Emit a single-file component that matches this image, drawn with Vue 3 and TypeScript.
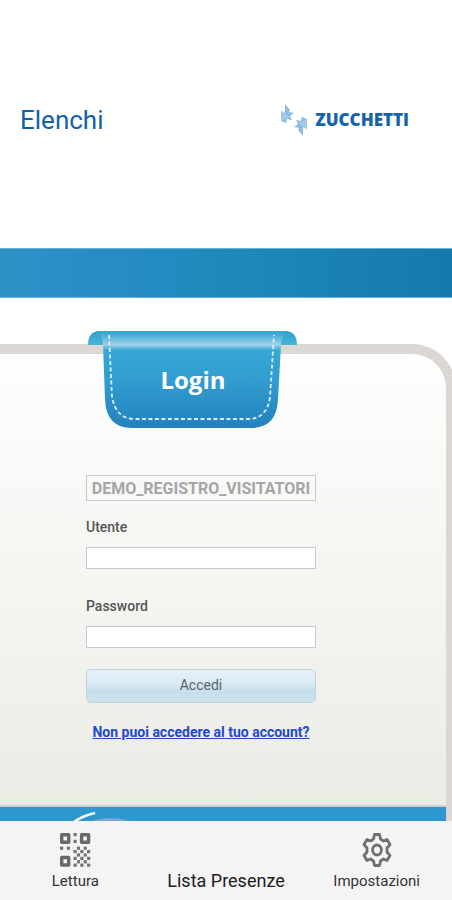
<script setup lang="ts">
import { ref } from 'vue'

const company = ref<string>('DEMO_REGISTRO_VISITATORI')
const user = ref<string>('')
const password = ref<string>('')

// Dark modules of the QR symbol on a 9 x 10 grid
const modules: [number, number][] = [
  [4, 0], [4, 2],
  [0, 4], [2, 4], [5, 4], [7, 4],
  [4, 5], [6, 5], [8, 5],
  [5, 6], [7, 6],
  [4, 7], [6, 7], [8, 7],
  [5, 8], [7, 8],
  [4, 9], [6, 9], [8, 9],
]
</script>

<template>
  <div class="page">
    <header class="header">
      <a class="title" href="#elenchi">Elenchi</a>
      <div class="brand">
        <svg class="brand-mark" viewBox="0 0 26 32" aria-hidden="true">
          <g id="brandArrow">
            <path d="M0 7L4 9V0L9 6L8 8L13 9L9 12L11 16L6 15L5 19L0 17Z" fill="#8dbbe0" />
            <path d="M0 7L4 9L8 13L0 17Z" fill="#a5cae8" />
          </g>
          <use href="#brandArrow" transform="rotate(180 13 16)" />
        </svg>
        <span class="brand-name">ZUCCHETTI</span>
      </div>
    </header>
    <div class="band"></div>

    <main class="content">
      <section class="card">
        <div class="ribbon">
          <svg class="ribbon-shape" viewBox="0 0 210 98" aria-hidden="true">
            <defs>
              <linearGradient id="ribbonFill" x1="0" y1="0" x2="0" y2="1">
                <stop offset="0" stop-color="#2ba4d4" />
                <stop offset="0.05" stop-color="#4db1da" />
                <stop offset="0.14" stop-color="#9ed2eb" />
                <stop offset="0.2" stop-color="#36a7d5" />
                <stop offset="0.5" stop-color="#329dd0" />
                <stop offset="1" stop-color="#2381bd" />
              </linearGradient>
              <linearGradient id="foldFill" x1="0" y1="0" x2="0" y2="1">
                <stop offset="0" stop-color="#2d9fc9" />
                <stop offset="1" stop-color="#49b6d7" />
              </linearGradient>
            </defs>
            <path d="M0 14Q0 0 12 0H197Q209 0 209 14H192V6H17V14Z" fill="url(#foldFill)" />
            <path d="M8 0H201Q193 3 193 14L190 68Q189 97 163 97H44Q18 97 17 68L15 14Q15 3 8 0Z" fill="url(#ribbonFill)" />
            <path d="M21 4 24 66Q28 88 47 88H160Q179 88 182 66L186 4" fill="none" stroke="#d8eff8" stroke-width="1.8" stroke-dasharray="4 2.500" />
          </svg>
          <h1 class="ribbon-title">Login</h1>
        </div>

        <form class="form" @submit.prevent>
          <input v-model="company" class="company" type="text" aria-label="DEMO_REGISTRO_VISITATORI" disabled />
          <div class="field">
            <label for="utente">Utente</label>
            <input id="utente" v-model="user" type="text" />
          </div>
          <div class="field">
            <label for="password">Password</label>
            <input id="password" v-model="password" type="password" />
          </div>
          <button class="submit" type="submit">Accedi</button>
          <a class="help" href="#account">Non puoi accedere al tuo account?</a>
        </form>
        <div class="card-foot">
          <svg class="swirl" viewBox="0 0 64 14" aria-hidden="true">
            <path d="M20 14Q38 8 58 14Z" fill="#7fa5d8" />
            <path d="M2 15Q10 9 23 6" fill="none" stroke="#f4fbff" stroke-width="2.5" />
          </svg>
        </div>
      </section>
    </main>

    <nav class="tabs">
      <a class="tab" href="#lettura">
        <svg class="tab-icon" viewBox="0 0 32 34" aria-hidden="true">
          <g fill="none" stroke="#696969" stroke-width="3.4" stroke-linejoin="round">
            <rect x="2.700" y="1.700" width="7" height="7.500" />
            <rect x="22.600" y="1.700" width="7" height="7.500" />
            <rect x="2.700" y="24.500" width="7" height="7.500" />
          </g>
          <rect
            v-for="([x, y], i) in modules"
            :key="i"
            :x="1 + x * 3.38"
            :y="y * 3.4"
            width="3.2"
            height="3.2"
            fill="#747474"
          />
        </svg>
        <span>Lettura</span>
      </a>
      <a class="tab tab-current" href="#presenze"><span>Lista Presenze</span></a>
      <a class="tab" href="#impostazioni">
        <svg class="tab-icon" viewBox="0 0 32 34" aria-hidden="true">
          <g fill="none" stroke="#707070" stroke-width="2.8" stroke-linejoin="round">
            <path d="M13.500 1.500h5l1 4.500 3 2 3.500-1.500 3 5-3 3.500v4l3 3.500-3 5-3.500-1.500-3 2-1 4.500h-5l-1-4.500-3-2-3.500 1.500-3-5 3-3.500v-4l-3-3.500 3-5 3.500 1.500 3-2z" />
            <ellipse cx="16" cy="17" rx="4.400" ry="5" />
          </g>
        </svg>
        <span>Impostazioni</span>
      </a>
    </nav>
  </div>
</template>

<style>
body {
  margin: 0;
  background: #fff;
}
</style>

<style scoped>
.page {
  display: flex;
  flex-direction: column;
  min-height: 100vh;
  overflow: hidden;
  font-family: Roboto, "Liberation Sans", sans-serif;
  color: #222;
}
.header {
  display: flex;
  align-items: center;
  justify-content: space-between;
  padding: 100px 43px 108px 20px;
  line-height: 40px;
}
.title {
  font-size: 26px;
  color: #1261a6;
  text-decoration: none;
}
.brand {
  display: flex;
  align-items: center;
  gap: 8px;
}
.brand-mark {
  width: 26px;
  height: 32px;
}
.brand-name {
  font-family: "Open Sans", "Noto Sans", sans-serif;
  font-size: 17px;
  font-weight: 800;
  color: #1265ad;
}
.band {
  height: 48px;
  border-top: 1px solid #6cb2d0;
  border-bottom: 1px solid #6cb2d0;
  background: linear-gradient(90deg, #2f92c7, #288dc5 20%, #1e88b9 55%, #1579ab);
}
.content {
  display: flex;
  flex: 1;
  flex-direction: column;
  padding-top: 46px;
}
.card {
  position: relative;
  display: flex;
  flex: 1;
  flex-direction: column;
  margin-right: -4px;
  border-top: 10px solid #dcd7d2;
  border-right: 10px solid #dcd7d2;
  border-top-right-radius: 44px;
  background: linear-gradient(180deg, #fefefe, #f8f8f6 30%, #f0f0eb 75%, #ebebe4);
}
.ribbon {
  position: absolute;
  top: -23px;
  left: 88px;
  width: 210px;
}
.ribbon-shape {
  display: block;
  width: 100%;
}
.ribbon-title {
  position: absolute;
  inset: 0;
  display: grid;
  place-items: center;
  margin: 0;
  font-family: "Open Sans", "Noto Sans", sans-serif;
  font-size: 24px;
  line-height: 32px;
  color: #fff;
}
.form {
  display: flex;
  flex: 1;
  flex-direction: column;
  padding: 121px 130px 0 86px;
}
.form input {
  box-sizing: border-box;
  width: 100%;
  min-width: 0;
  height: 22px;
  padding: 0 2px;
  border: 1px solid #c9c9c7;
  border-radius: 0;
  background: #fff;
  font-family: inherit;
  font-size: 14px;
}
.form .company {
  height: 26px;
  padding: 0 1px;
  background: transparent;
  font-size: 16px;
  font-weight: 700;
  text-align: center;
  color: #a5a5a5;
}
.field {
  display: flex;
  flex-direction: column;
  gap: 10px;
  padding-top: 16px;
  padding-bottom: 11px;
  font-size: 14px;
  font-weight: 500;
  line-height: 20px;
  color: #555;
}
.submit {
  height: 34px;
  margin-top: 10px;
  padding: 0 6px 2px;
  border: 1px solid #c3d3da;
  border-radius: 5px;
  background: linear-gradient(180deg, #e6f0f8, #dcebf4 40%, #c6dfeb 65%, #cce3ed);
  font-family: inherit;
  font-size: 14px;
  color: #59646b;
}
.help {
  padding-top: 19px;
  font-size: 14px;
  font-weight: 700;
  line-height: 20px;
  text-align: center;
  white-space: nowrap;
  color: #2049cf;
}
.card-foot {
  height: 14px;
  border-top: 2px solid #d3cec5;
  background: #2e97cf;
}
.swirl {
  display: block;
  width: 64px;
  height: 14px;
  margin-left: 72px;
}
.tabs {
  display: grid;
  grid-template-columns: repeat(3, 1fr);
  z-index: 1;
  padding: 12px 0 8px;
  background: #f4f4f4;
}
.tab {
  display: flex;
  flex-direction: column;
  align-items: center;
  justify-content: flex-end;
  gap: 3px;
  font-size: 15px;
  line-height: 22px;
  color: #333;
  text-decoration: none;
}
.tab-current {
  font-size: 18px;
  color: #1c1c1c;
}
.tab-icon {
  width: 32px;
  height: 34px;
}
</style>
